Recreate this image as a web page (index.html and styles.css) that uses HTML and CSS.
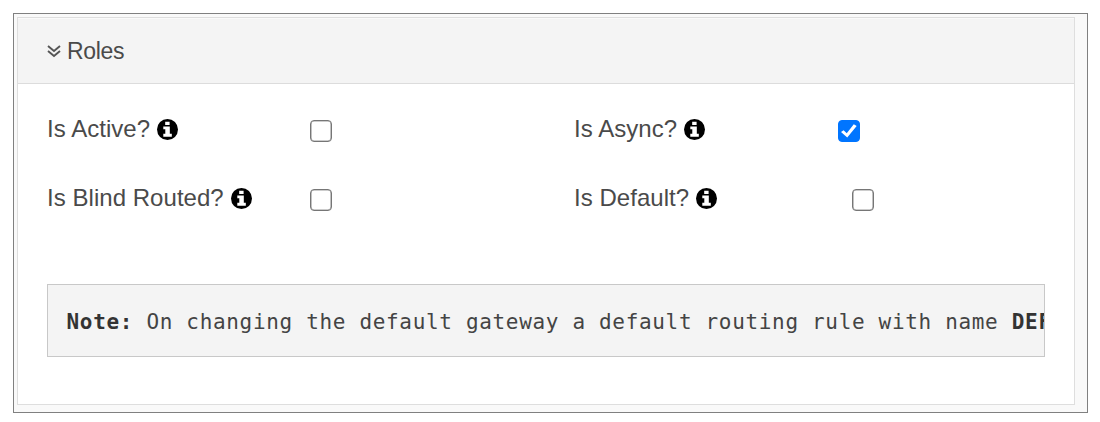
FILE: index.html
```html
<!DOCTYPE html>
<html lang="en">
<head>
<meta charset="utf-8">
<title>Roles</title>
<link rel="stylesheet" href="styles.css">
</head>
<body>
<svg class="defs" width="0" height="0">
  <symbol id="info" viewBox="0 0 20 20">
    <circle cx="10" cy="10" r="10" fill="#000"/>
    <path d="M7.8 2.6h4.2v3.2H7.8zM6 7.2h6.2v6.9h1.9v2.7H6v-2.7h1.9V9.8H6z" fill="#fff"/>
  </symbol>
</svg>
<div class="frame">
  <section class="panel">
    <header class="panel-head">
      <svg class="chevrons" viewBox="0 0 14 13"><path d="M1 1l6 5 6-5M1 6l6 5 6-5"/></svg>
      <span class="title">Roles</span>
    </header>
    <div class="panel-body">
      <div class="grid">
        <div class="field"><label for="active">Is Active?</label><svg class="info"><use href="#info"/></svg></div>
        <div class="control"><input class="check" type="checkbox" id="active"></div>
        <div class="field"><label for="async">Is Async?</label><svg class="info"><use href="#info"/></svg></div>
        <div class="control"><input class="check" type="checkbox" id="async" checked></div>
        <div class="field"><label for="blind">Is Blind Routed?</label><svg class="info"><use href="#info"/></svg></div>
        <div class="control"><input class="check" type="checkbox" id="blind"></div>
        <div class="field"><label for="default">Is Default?</label><svg class="info"><use href="#info"/></svg></div>
        <div class="control indented"><input class="check" type="checkbox" id="default"></div>
      </div>
      <pre class="note"><b>Note:</b> On changing the default gateway a default routing rule with name <b>DEF</b></pre>
    </div>
  </section>
</div>
</body>
</html>
```
FILE: styles.css
```css
* { box-sizing: border-box; }
body { margin: 0; padding: 13px 12px 9px 13px; background: #fff; color: #4a4a4a; font-family: "Liberation Sans", Arial, sans-serif; }
.defs { position: absolute; }
.frame { height: 400px; padding: 3px 12px 7px 3px; background: #f9f9f9; border: 1px solid #808080; }
.panel { height: 388px; background: #fff; border: 1px solid #dedede; }
.panel-head { display: flex; align-items: center; height: 66px; padding: 0 0 0 29px; background: #f4f4f4; border-bottom: 1px solid #dcdcdc; border-top: 1px solid #fafafa; }
.chevrons { width: 14px; height: 13px; margin-right: 6px; fill: none; stroke: #555; stroke-width: 1.9; }
.title { font-size: 23px; line-height: 28px; letter-spacing: -.3px; }
.panel-body { padding: 12px 29px 0; }
.grid { display: grid; grid-template-columns: 263px 264px 264px 1fr; grid-auto-rows: 69px; }
.field { display: flex; align-items: center; gap: 7px; height: 66px; }
.field label { font-size: 24px; line-height: 30px; letter-spacing: .04px; white-space: nowrap; }
.info { width: 21px; height: 21px; flex: none; }
.control { display: flex; align-items: center; height: 70px; }
.indented { padding-left: 14px; }
.check { appearance: none; width: 22px; height: 22px; margin: 0; border: 1.5px solid #767676; border-radius: 4px; background: #fff; box-shadow: inset 0 0 0 .6px #999; }
.check:checked { border-color: #0075ff; background: #0075ff; box-shadow: none; display: grid; place-items: center; }
.check:checked::before { content: ""; width: 16px; height: 14px; background: #fff; clip-path: polygon(0 57%, 16% 45%, 36% 66%, 80% 2%, 98% 14%, 39% 97%); }
.note { height: 73px; margin: 50px 0 0; padding: 0 0 0 18.5px; overflow: hidden; background: #f4f4f4; border: 1px solid #c8c8c8; color: #444; font-family: "DejaVu Sans Mono", monospace; font-size: 21px; line-height: 74px; letter-spacing: .67px; white-space: pre; }
.note b { color: #333; }
```
